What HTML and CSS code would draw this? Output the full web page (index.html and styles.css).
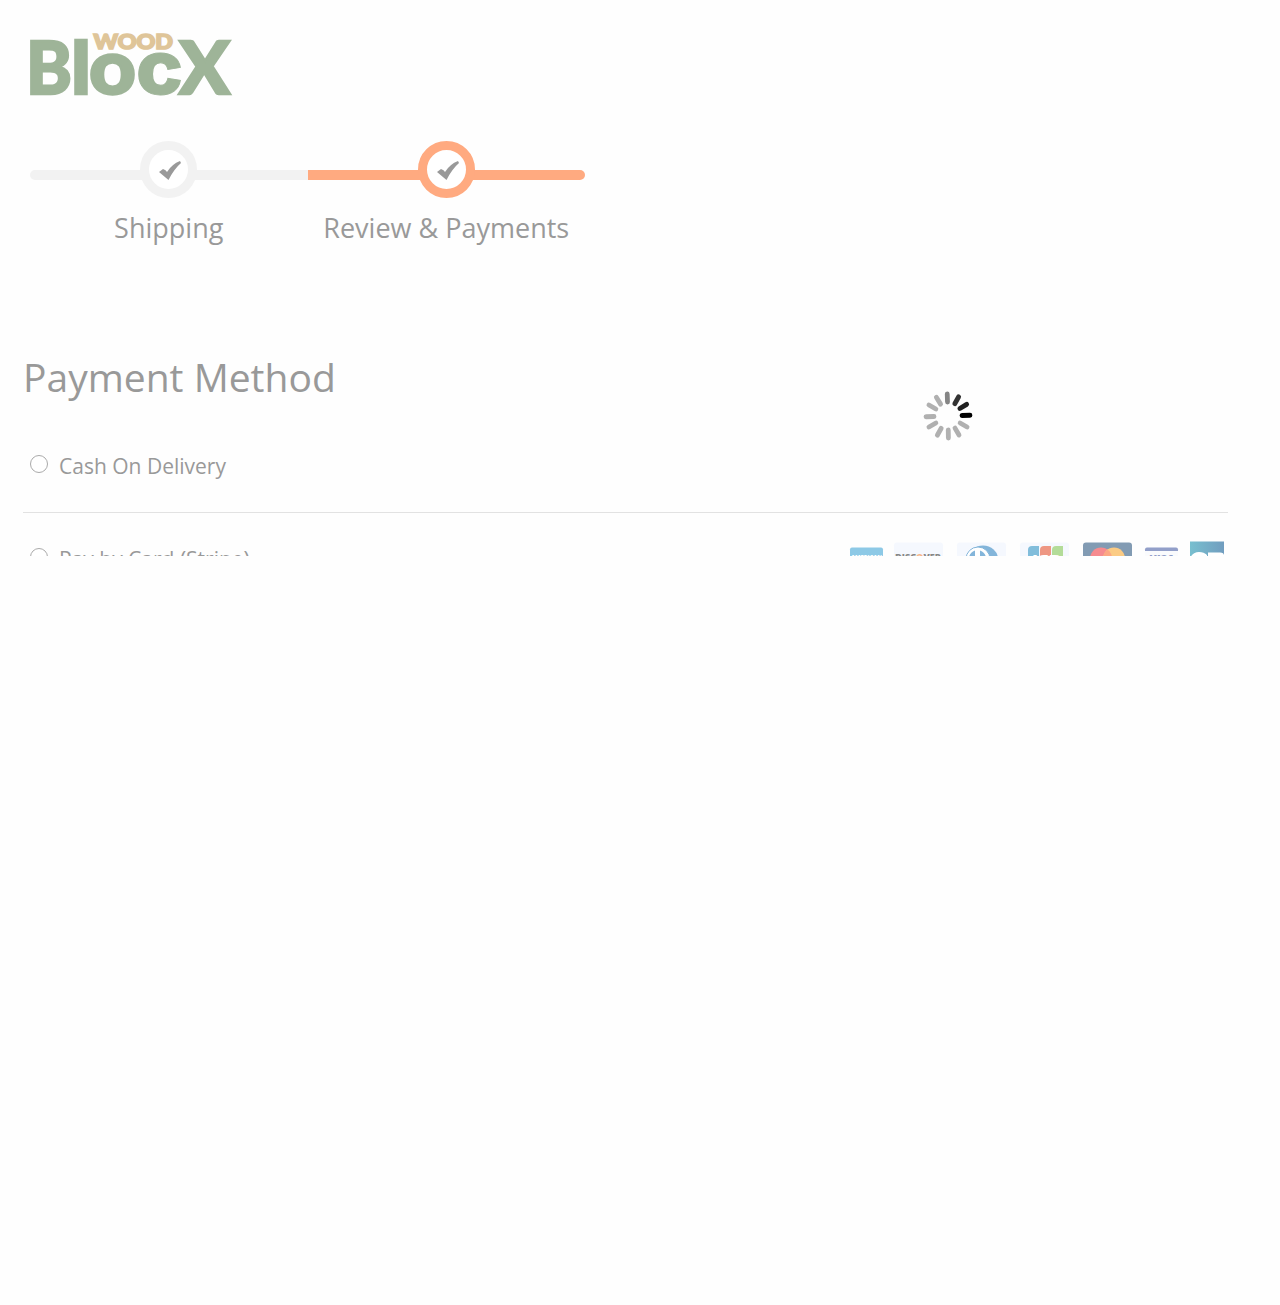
FILE: index.html
```html
<!DOCTYPE html>
<html lang="en">
<head>
<meta charset="utf-8">
<title>Checkout</title>
<link rel="stylesheet" href="styles.css">
</head>
<body>
<div class="checkout">
  <header class="header">
    <svg class="logo" viewBox="0 0 202 66" role="img" aria-label="Wood BlocX">
      <g class="logo-main">
        <text x="-4" y="63" font-size="73" textLength="46" lengthAdjust="spacingAndGlyphs">B</text>
        <text x="41" y="63" font-size="72" textLength="20" lengthAdjust="spacingAndGlyphs">l</text>
        <text x="59" y="63" font-size="77" textLength="47" lengthAdjust="spacingAndGlyphs">o</text>
        <text class="logo-c" x="106" y="63" font-size="74" textLength="47" lengthAdjust="spacingAndGlyphs">c</text>
        <text x="149" y="63" font-size="73" textLength="51" lengthAdjust="spacingAndGlyphs">X</text>
      </g>
      <text class="logo-top" x="63.500" y="18" font-size="20.500" textLength="79.500" lengthAdjust="spacingAndGlyphs">WOOD</text>
    </svg>
  </header>
  <ol class="progress">
    <li class="step">
      <span class="bar"></span>
      <span class="dot"><svg viewBox="0 0 24 20"><path d="M1 12 5 9Q8 10 9 12Q14 4 22 1L23 3Q16 9 10.500 20Z"/></svg></span>
      <span class="step-label">Shipping</span>
    </li>
    <li class="step active">
      <span class="bar"></span>
      <span class="dot"><svg viewBox="0 0 24 20"><path d="M1 12 5 9Q8 10 9 12Q14 4 22 1L23 3Q16 9 10.500 20Z"/></svg></span>
      <span class="step-label">Review &amp; Payments</span>
    </li>
  </ol>
  <main class="payment">
    <h1>Payment Method</h1>
    <label class="method"><span class="radio"></span><span class="name">Cash On Delivery</span></label>
    <label class="method card-method"><span class="radio"></span><span class="name">Pay by Card (Stripe)</span>
      <svg class="cards" viewBox="0 0 380 40">
        <rect x="3" y="7.500" width="33" height="30" rx="2" fill="#8dc9e6"/>
        <text x="4" y="21" font-size="8" fill="#fff" textLength="31" lengthAdjust="spacingAndGlyphs">AMERICAN</text>
        <rect x="47" y="2.500" width="49" height="34" rx="3" fill="#f5f8fe"/>
        <text x="48" y="20" font-size="8.500" fill="#888" textLength="46" lengthAdjust="spacingAndGlyphs">DISC<tspan fill="#f6b488">O</tspan>VER</text>
        <rect x="110" y="2.500" width="49" height="34" rx="3" fill="#f5f8fe"/>
        <ellipse cx="136" cy="19" rx="15" ry="13.500" fill="#83b5da"/>
        <circle cx="131" cy="19" r="12" fill="#fff" stroke="#83b5da"/>
        <path d="M128 10.500a9 9 0 0 0 0 17zM133 10.500a9 9 0 0 1 0 17z" fill="#83b5da"/>
        <rect x="173" y="2.500" width="49" height="34" rx="3" fill="#f5f8fe"/>
        <path d="M181 32V10q0-4 4-4h7v26z" fill="#81bddb"/>
        <path d="M193 32V10q0-4 4-4h7v26z" fill="#ee9783"/>
        <path d="M205 32V10q0-4 4-4h7v26z" fill="#b3dc99"/>
        <text x="185" y="20.500" font-size="9" fill="#fff" textLength="28" lengthAdjust="spacingAndGlyphs">JCB</text>
        <rect x="236" y="2.500" width="49" height="34" rx="3" fill="#829bb3"/>
        <circle cx="254" cy="18.500" r="11" fill="#f68b8f"/>
        <circle cx="267" cy="18.500" r="11" fill="#fbcb84"/>
        <path d="M260.500 9.600a11 11 0 0 1 0 17.800a11 11 0 0 1 0-17.800" fill="#fca783"/>
        <rect x="298" y="7.500" width="33" height="30" rx="2" fill="#fafbfd"/>
        <path d="M298 11V9.500q0-2 2-2h29q2 0 2 2v1.500z" fill="#929fc9"/>
        <text x="302" y="20.500" font-size="8.500" font-style="italic" fill="#929fc9" textLength="25" lengthAdjust="spacingAndGlyphs">VISA</text>
        <defs><linearGradient id="cb" x2="1"><stop stop-color="#78bfcf"/><stop offset="1" stop-color="#719dbf"/></linearGradient></defs>
        <rect x="343" y="1.500" width="34" height="34" fill="url(#cb)"/>
        <path d="M343 18q3-6 9-6 5 0 8 3v13h-17zM361 12.500h12q4 0 4 3v13h-16z" fill="#fff"/>
      </svg>
    </label>
  </main>
  <svg class="spinner" viewBox="-25 -25 50 50" fill="none" stroke-width="4.800" stroke-linecap="round">
    <g stroke="#b0b0b0">
      <path d="M14 0H22" transform="rotate(30)"/><path d="M14 0H22" transform="rotate(60)"/>
      <path d="M14 0H22" transform="rotate(89)"/><path d="M14 0H22" transform="rotate(119)"/>
      <path d="M14 0H22" transform="rotate(150)"/><path d="M14 0H22" transform="rotate(178)"/>
      <path d="M14 0H22" transform="rotate(210)"/><path d="M14 0H22" transform="rotate(238)"/>
    </g>
    <path d="M14 0H22" transform="rotate(268)" stroke="#858585"/>
    <path d="M14 0H22" transform="rotate(299)" stroke="#333"/>
    <path d="M14 0H22" transform="rotate(328)" stroke="#202020"/>
    <path d="M14 0H22" transform="rotate(358)" stroke="#000"/>
  </svg>
</div>
</body>
</html>
```
FILE: styles.css
```css
* { box-sizing: border-box; }
body {
  margin: 0;
  background: #fefefe;
  color: #999;
  font-family: "Open Sans", sans-serif;
  font-weight: 400;
}
.checkout {
  position: relative;
  height: 556px;
  overflow: hidden;
}
.header { padding: 31px 30px 0; }
.logo { display: block; width: 202px; height: 66px; overflow: visible; }
.logo text { font-family: Lato, sans-serif; font-weight: 900; }
.logo .logo-c { font-family: Inter, sans-serif; font-weight: 800; stroke-width: 1; }
.logo-main { fill: #9eb498; stroke: #9eb498; stroke-width: 2.4; }
.logo-top { fill: #dfc599; stroke: #dfc599; stroke-width: 1.6; }
.progress {
  display: flex;
  width: 555px;
  margin: 44px 0 0 30px;
  padding: 0;
  list-style: none;
}
.step {
  display: grid;
  grid-template-columns: 100%;
  grid-template-rows: 57px 60px;
  flex: 1;
  justify-items: center;
}
.bar, .dot { grid-area: 1 / 1; }
.bar {
  width: 100%;
  height: 10px;
  margin-top: 29px;
  border-radius: 5px 0 0 5px;
  background: #f2f2f2;
}
.dot {
  display: flex;
  align-items: center;
  justify-content: center;
  width: 57px;
  height: 57px;
  border: 9px solid #f2f2f2;
  border-radius: 50%;
  background: #fff;
}
.dot svg { width: 24px; height: 20px; margin: 1px 0 0 3px; fill: #999; }
.active .bar { border-radius: 0 5px 5px 0; background: #ffaa80; }
.active .dot { border-color: #ffaa80; }
.step-label { font-size: 27px; line-height: 38px; margin-top: 11px; white-space: nowrap; }
.payment { width: 1205px; margin: 83px 0 0 23px; }
h1 {
  margin: 0;
  padding: 9px 0 1px;
  font-size: 39px;
  font-weight: 400;
  line-height: 54px;
}
.method {
  display: flex;
  align-items: flex-start;
  height: 108px;
  padding: 46px 0 0 7px;
  border-bottom: 1px solid #e2e2e2;
}
.radio {
  width: 18px;
  height: 18px;
  margin: 4px 11px 0 0;
  border: 1.5px solid #aaa;
  border-radius: 50%;
  background: #fff;
}
.name { font-size: 21px; line-height: 30px; }
.card-method { padding-top: 31px; border: 0; }
.cards { width: 380px; height: 40px; margin: -4px 1px 0 auto; font-weight: 800; }
.spinner {
  position: absolute;
  left: 922.5px;
  top: 391px;
  width: 50px;
  height: 50px;
}
```
